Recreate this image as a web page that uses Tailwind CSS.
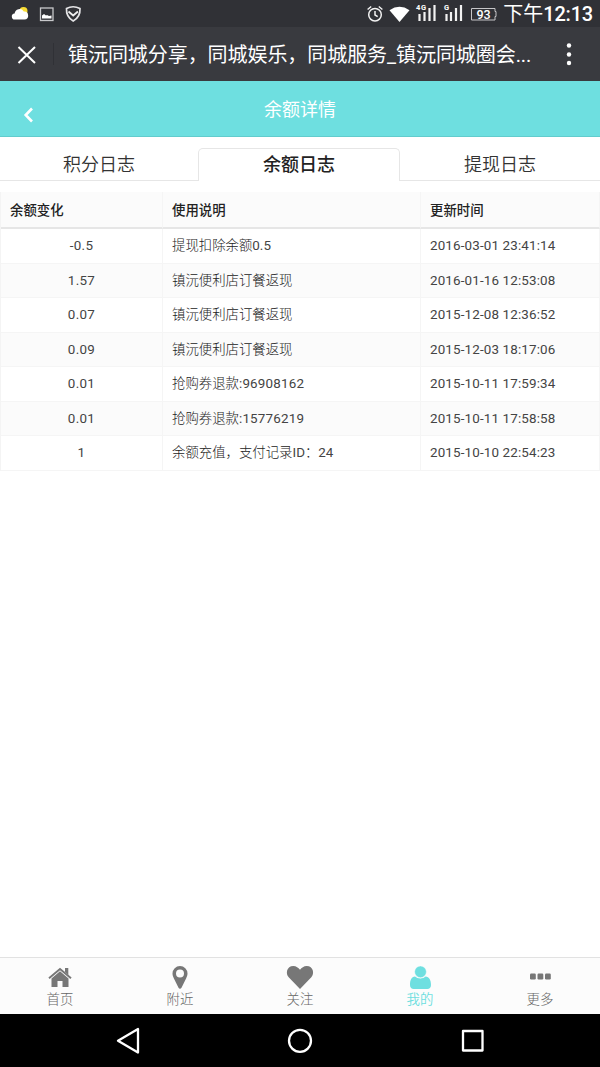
<!DOCTYPE html>
<html lang="zh-CN">
<head>
<meta charset="utf-8">
<title>余额详情</title>
<script src="https://cdn.jsdelivr.net/npm/@tailwindcss/browser@4"></script>
</head>
<body class="bg-white">
<div class="flex h-[1067px] w-[600px] flex-col overflow-hidden bg-white font-['Roboto','Noto_Sans_CJK_SC',sans-serif] whitespace-nowrap text-[#333]">

  <!-- Status bar -->
  <div class="flex h-[27px] shrink-0 items-center justify-between bg-[#303136] text-white">
    <svg class="h-[27px] w-[90px]" viewBox="0 0 90 27">
      <circle cx="23.5" cy="11" r="4" fill="#f8dc35"/>
      <path d="M15 19.500a3 3 0 0 1-.4-6 5 5 0 0 1 9.200-2A4 4 0 0 1 24.500 19.500z" fill="#fff"/>
      <rect x="40.500" y="8" width="12.500" height="12.500" fill="none" stroke="#c8c8cb" stroke-width="1.300"/>
      <path d="M42 18.500v-3l2-1.500 2 1.500 1-.5 2 1 2.500-.5v3z" fill="#fff"/>
      <path d="M66.500 8.500Q73 5 80 8.500Q80.500 17 73.200 21Q66 17 66.500 8.500z" fill="none" stroke="#e4e4e6" stroke-width="1.700"/>
      <path d="M68.500 11.500l4.700 4 4.700-4" fill="none" stroke="#eee" stroke-width="1.800"/>
    </svg>
    <div class="flex items-center pr-[7px]">
      <svg class="h-[27px] w-[134px]" viewBox="364 0 134 27" fill="none" stroke="#f2f2f2">
        <circle cx="375" cy="14.700" r="6.300" stroke-width="1.500"/>
        <path d="M375 11v4l2.700 1.700M367.600 9.500l3.600-3M382.400 9.500l-3.600-3" stroke-width="1.500"/>
        <path d="M389.500 10.200Q399.500 3.500 409.500 10.200L399.500 22z" fill="#fff" stroke="none"/>
        <path d="M419.500 14v7M424.500 12v9M429.500 8v13M434.500 5v16M446.500 14v7M451 12v9M456 8v13M461 5v16" stroke-width="2.200"/>
        <text x="416" y="9.500" fill="#fff" stroke="none" font-size="7.500" font-weight="700" textLength="10">4G</text>
        <text x="444" y="9.500" fill="#fff" stroke="none" font-size="7.500" font-weight="700">G</text>
        <path d="M471.500 8.500h23.500v3h1v5h-1v3.500h-23.500z" stroke="#c6c6c8" stroke-width="1"/>
        <text x="476.500" y="18.800" fill="#fff" stroke="none" font-size="12.500" font-weight="500" textLength="14">93</text>
      </svg>
      <span class="ml-[5px] pt-[2px] text-[20px] leading-[25px]">下午<span class="font-medium tracking-[-0.2px]">12:13</span></span>
    </div>
  </div>

  <!-- Browser title bar -->
  <div class="flex h-[54px] shrink-0 items-center bg-[#393a3f] text-white">
    <svg class="h-[54px] w-[54px]" viewBox="0 0 54 54"><path d="M18.500 20l16.500 16M35 20l-16.500 16" stroke="#fff" stroke-width="2"/><path d="M53.500 16v22" stroke="#303136"/></svg>
    <h1 class="ml-[14px] w-[470px] pt-[3px] text-[20px] leading-[51px] tracking-[-0.06px]">镇沅同城分享，同城娱乐，同城服务_镇沅同城圈会...</h1>
    <svg class="ml-[23px] h-[54px] w-4" viewBox="0 0 16 54" fill="#fff"><circle cx="8" cy="18.500" r="2.200"/><circle cx="8" cy="27.500" r="2.200"/><circle cx="8" cy="36" r="2.200"/></svg>
  </div>

  <!-- Page header -->
  <header class="grid h-[56px] shrink-0 grid-cols-[100px_1fr_100px] border-b border-[#62cccd] bg-[#6edfe0] text-white">
    <svg class="h-[55px] w-[60px]" viewBox="0 0 60 55"><path d="M32 27.500l-6.300 6.500 6.300 6.500" fill="none" stroke="#fff" stroke-width="2.600"/></svg>
    <h2 class="pt-[2px] text-center text-[18px] leading-[53px]">余额详情</h2>
  </header>

  <!-- Tabs -->
  <nav class="mt-[11px] flex h-[33px] shrink-0 text-center text-[18px] leading-[34px] font-[350]">
    <a class="w-[198px] border-b border-[#e6e6e6]">积分日志</a>
    <a class="w-[202px] rounded-t-[5px] border-x border-t border-[#e6e6e6] font-medium leading-[32px] text-[#222]">余额日志</a>
    <a class="w-[200px] border-b border-[#e6e6e6]">提现日志</a>
  </nav>

  <!-- Balance log -->
  <table class="mt-[11px] w-[600px] shrink-0 table-fixed border-separate border-spacing-0 border-l border-[#f4f4f4] text-[13.400px] leading-[20px] text-[#444]">
    <colgroup><col class="w-[162px]"><col class="w-[258px]"><col class="w-[179px]"></colgroup>
    <thead>
      <tr class="h-[37px] bg-[#fbfbfb] text-left text-[#222] [&>th]:border-r [&>th]:border-b-2 [&>th]:border-r-[#f5f5f5] [&>th]:border-b-[#e6e6e6] [&>th]:px-[9px] [&>th]:pt-[2px] [&>th]:font-medium"><th>余额变化</th><th>使用说明</th><th>更新时间</th></tr>
    </thead>
    <tbody class="[&_td]:h-[34.500px] [&_td]:border-r [&_td]:border-b [&_td]:border-[#f5f5f5] [&_td]:px-[9px] [&_td]:pt-px [&_td:first-child]:text-center [&_td:first-child]:tracking-[0.3px] [&_td:nth-child(2)]:font-light [&_td:nth-child(2)]:text-[#222] [&_td:last-child]:tracking-[0.15px] [&_span]:font-normal [&_span]:text-[#444] [&>tr:nth-child(even)]:bg-[#fbfbfb]">
      <tr><td>-0.5</td><td>提现扣除余额<span>0.5</span></td><td>2016-03-01 23:41:14</td></tr>
      <tr><td>1.57</td><td>镇沅便利店订餐返现</td><td>2016-01-16 12:53:08</td></tr>
      <tr><td>0.07</td><td>镇沅便利店订餐返现</td><td>2015-12-08 12:36:52</td></tr>
      <tr><td>0.09</td><td>镇沅便利店订餐返现</td><td>2015-12-03 18:17:06</td></tr>
      <tr><td>0.01</td><td>抢购券退款<span class="tracking-[0.2px]">:96908162</span></td><td>2015-10-11 17:59:34</td></tr>
      <tr><td>0.01</td><td>抢购券退款<span class="tracking-[0.2px]">:15776219</span></td><td>2015-10-11 17:58:58</td></tr>
      <tr><td>1</td><td>余额充值，支付记录<span>ID</span>：<span>24</span></td><td>2015-10-10 22:54:23</td></tr>
    </tbody>
  </table>

  <!-- Bottom navigation -->
  <nav class="mt-auto grid h-[57px] shrink-0 grid-cols-5 border-t border-[#e2e2e2] bg-[#fcfcfc] text-center text-[13.400px] leading-[18px] font-light text-[#666]">
    <a class="flex flex-col items-center pt-[5px]">
      <svg class="h-7 w-8" viewBox="0 0 32 28" fill="#777"><path d="M16 8.200l8.500 7.200V24h-6v-6h-5v6h-6v-8.600z"/><path d="M5 15.300L16 6l11 9.300" fill="none" stroke="#777" stroke-width="1.900"/><path d="M21 5h3.300v7L21 9z"/></svg>
      <span>首页</span>
    </a>
    <a class="flex flex-col items-center pt-[5px]">
      <svg class="h-7 w-8" viewBox="0 0 32 28" fill="#777"><path fill-rule="evenodd" d="M16 3a7.500 7.500 0 0 1 7.500 7.500c0 2-.6 3.200-1.300 4.700l-4.700 9.500c-.7 1.300-2.300 1.300-3 0l-4.700-9.500c-.7-1.500-1.300-2.700-1.300-4.700A7.500 7.500 0 0 1 16 3zm0 3.600a4 4 0 1 0 0 8 4 4 0 0 0 0-8z"/></svg>
      <span>附近</span>
    </a>
    <a class="flex flex-col items-center pt-[5px]">
      <svg class="h-7 w-8" viewBox="0 0 32 28" fill="#777"><path d="M16 26L4.700 14.300C1.300 10.700 2.600 3 9.300 3c3 0 5 1.800 6.700 3.800C17.700 4.800 19.700 3 22.700 3c6.700 0 8 7.700 4.600 11.300z"/></svg>
      <span>关注</span>
    </a>
    <a class="flex flex-col items-center pt-[5px] text-[#6edfe0]">
      <svg class="h-7 w-8" viewBox="0 0 32 28" fill="#6edfe0"><path d="M11 13.500c1.500 1.300 3.200 2 5.300 2s3.800-.7 5.300-2c3.500.4 5.400 3.500 5.400 8.500 0 2.500-1.500 4-3.700 4H9.700C7.500 26 6 24.500 6 22c0-5 1.500-8.100 5-8.500z"/><circle cx="16.500" cy="8.800" r="5.900" stroke="#fcfcfc" stroke-width=".5"/></svg>
      <span class="font-[350]">我的</span>
    </a>
    <a class="flex flex-col items-center pt-[5px]">
      <svg class="h-7 w-8" viewBox="0 0 32 28" fill="#777"><rect x="6" y="10.500" width="5.800" height="6" rx="1.200"/><rect x="13.500" y="10.500" width="5.800" height="6" rx="1.200"/><rect x="21" y="10.500" width="5.800" height="6" rx="1.200"/></svg>
      <span>更多</span>
    </a>
  </nav>

  <!-- System keys -->
  <div class="flex h-[53px] shrink-0 items-center justify-center gap-[132px] bg-black">
    <svg class="h-10 w-10" viewBox="0 0 40 40" fill="none" stroke="#fff" stroke-width="2.300" stroke-linejoin="round"><path d="M30 8v23.500L10 19.700z"/></svg>
    <svg class="h-10 w-10" viewBox="0 0 40 40" fill="none" stroke="#fff" stroke-width="2.300"><circle cx="20" cy="19.800" r="11"/></svg>
    <svg class="h-10 w-10" viewBox="0 0 40 40" fill="none" stroke="#fff" stroke-width="2.300" stroke-linejoin="round"><rect x="11" y="10" width="19.500" height="19.500"/></svg>
  </div>
</div>
</body>
</html>
